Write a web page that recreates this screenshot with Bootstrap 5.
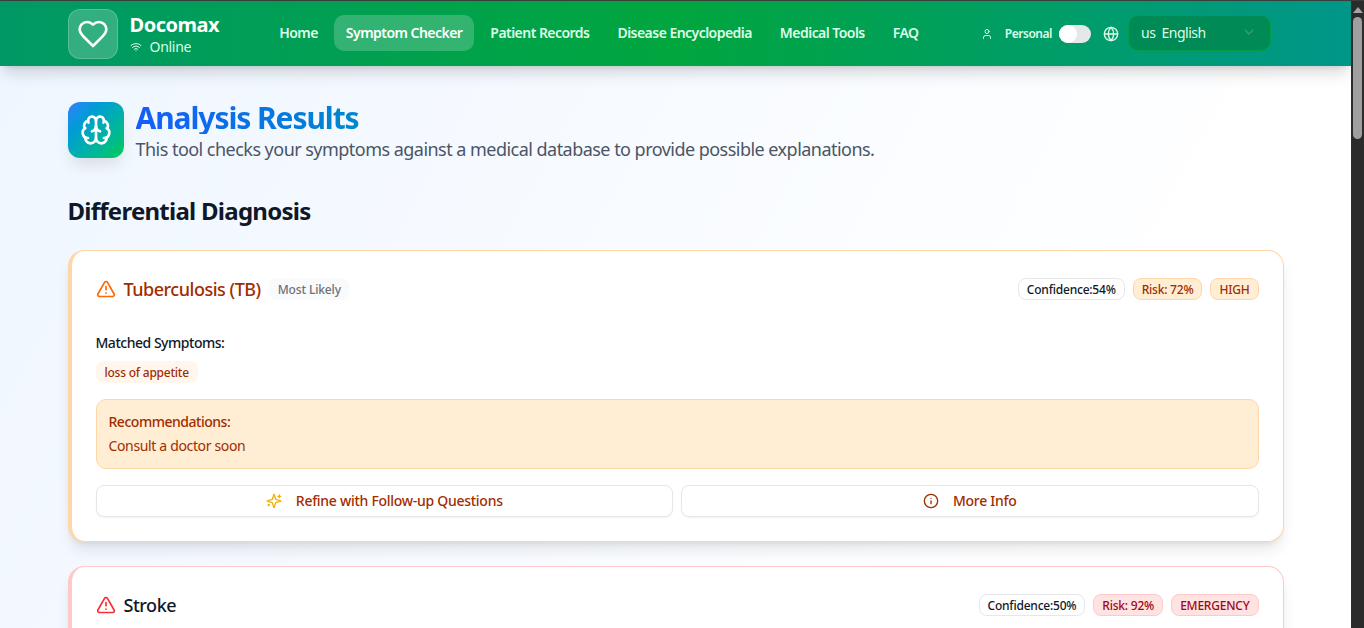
<!DOCTYPE html>
<html lang="en">
<head>
<meta charset="utf-8">
<title>Docomax</title>
<link href="https://cdn.jsdelivr.net/npm/bootstrap@5.3.0/dist/css/bootstrap.min.css" rel="stylesheet">
<style>
html,body{height:628px;overflow:hidden}
body{font-family:"Noto Sans",sans-serif;background:#2b2b2b;color:#101828;letter-spacing:-.03em}
.topline{height:1px;background:#3a3f3c}
.shell{height:627px}
.viewport{width:1351px;height:627px;overflow:hidden;background:linear-gradient(to bottom right,#eff6ff,#fff 50%) no-repeat;background-size:100% 2500px;background-color:#fff}
.fakebar{width:13px;background:#2b2b2b;padding:2px 1px}
.fakebar i{display:block}
.sb-up{width:0;height:0;border:5px solid transparent;border-top:0;border-bottom:6px solid #a3a3a3;margin:4px auto 4px}
.sb-thumb{width:9px;height:122px;border-radius:5px;background:#9f9f9f;margin:0 auto}
.appbar{height:65px;background:linear-gradient(90deg,#009966,#00a63e 50%,#009689);box-shadow:0 10px 15px -3px rgba(0,0,0,.15),0 4px 6px -4px rgba(0,0,0,.12);position:relative}
.wrap-x{padding:0 80px 0 67.5px}
.logo-box{width:50px;height:50px;border-radius:12px;background:rgba(255,255,255,.2);border:1px solid rgba(255,255,255,.2)}
.brand-block{margin-top:2px}
.brand-name{font-size:20px;font-weight:700;line-height:24px;color:#fff}
.brand-sub{font-size:14px;line-height:20px;color:#dcfce7;letter-spacing:-.02em}
.mainlink{font-size:14px;font-weight:600;color:#dcfce7;padding:8px 12px;line-height:20px;border-radius:10px;text-decoration:none;white-space:nowrap;letter-spacing:-.0385em}
.mainlink.on{background:rgba(255,255,255,.2);color:#fff}
.links{margin-left:48px;gap:4px;margin-bottom:1px}
.mode-label{font-size:12px;font-weight:600;color:#dcfce7;margin-right:7px}
.switcher{width:32px;height:18px;border-radius:9px;background:#e5e7eb;position:relative;margin-right:12px}
.switcher::after{content:"";position:absolute;left:0;top:0;width:18px;height:18px;border-radius:50%;background:#fff}
.lang-box{width:143px;height:36px;border-radius:10px;background:#008a55;border:1px solid #00a04a;padding:0 13px 2px 12px;font-size:14px;color:#dcfce7;margin-left:9px;margin-bottom:1px}
.lang-code{margin-right:6px}
.page-x{padding:36px 67.5px 0}
.head-ico{width:56px;height:56px;border-radius:12px;background:linear-gradient(135deg in oklab,#2b7fff,#00c950);box-shadow:0 10px 15px -3px rgba(0,0,0,.1)}
.title-main{font-size:30px;font-weight:700;line-height:32px;margin:0;background:linear-gradient(90deg,#155dfc,#0088cc);-webkit-background-clip:text;background-clip:text;color:transparent;display:inline-block;letter-spacing:-.036em}
.title-sub{font-size:18px;line-height:28px;color:#4a5565;margin:0;letter-spacing:-.0295em}
.sect-title{font-size:24px;font-weight:700;line-height:32px;color:#101828;margin:32px 0 23px;letter-spacing:-.031em}
.dx-card{background:#fff;border:1px solid;border-left-width:4px;border-radius:16px;padding:24px;box-shadow:0 10px 15px -3px rgba(0,0,0,.1),0 4px 6px -4px rgba(0,0,0,.1);margin-bottom:24px}
.dx-orange{border-color:#ffd6a7}
.dx-red{border-color:#ffc9c9}
.dx-name{font-size:18px;font-weight:500;line-height:28px;margin:0}
.tx-orange{color:#9f2d00}
.tag-soft{font-size:12px;font-weight:500;color:#6e7176;background:#f9fafb;border-radius:8px;padding:4px 8px 2px 9px;line-height:16px;letter-spacing:-.012em}
.pill{font-size:12px;font-weight:500;line-height:16px;padding:3px 8px 1px;border:1px solid;border-radius:8px;white-space:nowrap;letter-spacing:-.018em}
.pill-w{background:#fff;border-color:#e5e7eb;color:#101828}
.pill-o{background:#ffedd4;border-color:#ffd6a7;color:#9f2d00}
.pill-r{background:#ffe2e2;border-color:#ffc9c9;color:#9f0712}
.match-label{font-size:14px;font-weight:500;line-height:20px;color:#101828;margin:30px 0 8px}
.chip-o{font-size:12px;font-weight:500;line-height:16px;padding:4px 9px 2px;background:#fff7ed;color:#9f2d00;border-radius:8px;letter-spacing:-.019em}
.rec-box{background:#ffedd4;border:1px solid #ffd6a7;border-radius:10px;padding:12px;margin-top:16px;color:#9f2d00;height:70px}
.rec-h{font-size:14px;font-weight:500;line-height:20px;margin:0 0 4px}
.rec-t{font-size:14px;line-height:20px;margin:0;letter-spacing:-.025em}
.act-btn{flex:1 1 0;height:32px;background:#fff;border:1px solid #e5e7eb;border-radius:8px;font-size:14px;font-weight:500;color:#9f2d00;box-shadow:0 1px 2px rgba(0,0,0,.05);padding:0 0 1px;letter-spacing:-.02em}
.act-btn svg{margin-right:14px}
.acts{margin-top:16px}
</style>
</head>
<body>
<div class="topline"></div>
<div class="shell d-flex">
  <div class="viewport flex-shrink-0">
    <nav class="appbar d-flex align-items-center wrap-x">
      <div class="logo-box d-flex align-items-center justify-content-center flex-shrink-0">
        <svg width="32" height="32" viewBox="0 0 24 24" fill="none" stroke="#fff" stroke-width="2" stroke-linecap="round" stroke-linejoin="round"><path d="M19 14c1.49-1.46 3-3.21 3-5.5A5.5 5.5 0 0 0 16.5 3c-1.76 0-3 .5-4.5 2-1.5-1.5-2.74-2-4.5-2A5.5 5.5 0 0 0 2 8.5c0 2.3 1.5 4.05 3 5.5l7 7Z"/></svg>
      </div>
      <div class="brand-block ms-2 ps-1">
        <div class="brand-name">Docomax</div>
        <div class="brand-sub d-flex align-items-center gap-2">
          <svg width="12" height="12" viewBox="0 0 24 24" fill="none" stroke="#dcfce7" stroke-width="2" stroke-linecap="round" stroke-linejoin="round"><path d="M12 20h.01"/><path d="M2 8.82a15 15 0 0 1 20 0"/><path d="M5 12.86a10 10 0 0 1 14 0"/><path d="M8.5 16.43a5 5 0 0 1 7 0"/></svg>
          <span>Online</span>
        </div>
      </div>
      <div class="links d-flex align-items-center">
        <a class="mainlink" href="#">Home</a>
        <a class="mainlink on" href="#">Symptom Checker</a>
        <a class="mainlink" href="#">Patient Records</a>
        <a class="mainlink" href="#">Disease Encyclopedia</a>
        <a class="mainlink" href="#">Medical Tools</a>
        <a class="mainlink" href="#">FAQ</a>
      </div>
      <div class="ms-auto d-flex align-items-center">
        <svg class="me-2" width="12" height="12" viewBox="0 0 24 24" fill="none" stroke="#dcfce7" stroke-width="2" stroke-linecap="round" stroke-linejoin="round"><path d="M19 21v-2a4 4 0 0 0-4-4H9a4 4 0 0 0-4 4v2"/><circle cx="12" cy="7" r="4"/></svg>
        <span class="mode-label ms-1">Personal</span>
        <span class="switcher"></span>
        <svg width="16" height="16" viewBox="0 0 24 24" fill="none" stroke="#dcfce7" stroke-width="2" stroke-linecap="round" stroke-linejoin="round"><circle cx="12" cy="12" r="10"/><path d="M12 2a14.5 14.5 0 0 0 0 20 14.5 14.5 0 0 0 0-20"/><path d="M2 12h20"/></svg>
        <div class="lang-box d-flex align-items-center">
          <span class="lang-code">us</span><span>English</span>
          <svg class="ms-auto" width="16" height="16" viewBox="0 0 24 24" fill="none" stroke="#3d9a73" stroke-width="2" stroke-linecap="round" stroke-linejoin="round"><path d="m6 9 6 6 6-6"/></svg>
        </div>
      </div>
    </nav>
    <main class="page-x">
      <header class="d-flex align-items-start gap-2">
        <div class="head-ico d-flex align-items-center justify-content-center flex-shrink-0 me-1">
          <svg width="32" height="32" viewBox="0 0 24 24" fill="none" stroke="#fff" stroke-width="2" stroke-linecap="round" stroke-linejoin="round"><path d="M12 18V5"/><path d="M15 13a4.17 4.17 0 0 1-3-4 4.17 4.17 0 0 1-3 4"/><path d="M17.598 6.5A3 3 0 1 0 12 5a3 3 0 1 0-5.598 1.5"/><path d="M17.997 5.125a4 4 0 0 1 2.526 5.77"/><path d="M18 18a4 4 0 0 0 2-7.464"/><path d="M19.967 17.483A4 4 0 1 1 12 18a4 4 0 1 1-7.967-.517"/><path d="M6 18a4 4 0 0 1-2-7.464"/><path d="M6.003 5.125a4 4 0 0 0-2.526 5.77"/></svg>
        </div>
        <div>
          <h1 class="title-main">Analysis Results</h1>
          <p class="title-sub">This tool checks your symptoms against a medical database to provide possible explanations.</p>
        </div>
      </header>
      <h2 class="sect-title">Differential Diagnosis</h2>
      <section class="dx-card dx-orange">
        <div class="d-flex align-items-center">
          <svg class="me-2" width="20" height="20" viewBox="0 0 24 24" fill="none" stroke="#ff6900" stroke-width="2" stroke-linecap="round" stroke-linejoin="round"><path d="m21.73 18-8-14a2 2 0 0 0-3.48 0l-8 14A2 2 0 0 0 4 21h16a2 2 0 0 0 1.73-3"/><path d="M12 9v4"/><path d="M12 17h.01"/></svg>
          <h3 class="dx-name tx-orange">Tuberculosis (TB)</h3>
          <span class="tag-soft ms-2">Most Likely</span>
          <div class="ms-auto d-flex gap-2">
            <span class="pill pill-w">Confidence:54%</span>
            <span class="pill pill-o">Risk: 72%</span>
            <span class="pill pill-o">HIGH</span>
          </div>
        </div>
        <div class="match-label">Matched Symptoms:</div>
        <div class="d-flex"><span class="chip-o">loss of appetite</span></div>
        <div class="rec-box">
          <p class="rec-h">Recommendations:</p>
          <p class="rec-t">Consult a doctor soon</p>
        </div>
        <div class="acts d-flex gap-2">
          <button class="act-btn d-flex align-items-center justify-content-center" type="button">
            <svg width="16" height="16" viewBox="0 0 24 24" fill="none" stroke="#f0b100" stroke-width="2" stroke-linecap="round" stroke-linejoin="round"><path d="M9.937 15.5A2 2 0 0 0 8.5 14.063l-6.135-1.582a.5.5 0 0 1 0-.962L8.5 9.936A2 2 0 0 0 9.937 8.5l1.582-6.135a.5.5 0 0 1 .963 0L14.063 8.5A2 2 0 0 0 15.5 9.937l6.135 1.581a.5.5 0 0 1 0 .964L15.5 14.063a2 2 0 0 0-1.437 1.437l-1.582 6.135a.5.5 0 0 1-.963 0z"/><path d="M20 3v4"/><path d="M22 5h-4"/><path d="M4 17v2"/><path d="M5 18H3"/></svg>
            Refine with Follow-up Questions
          </button>
          <button class="act-btn d-flex align-items-center justify-content-center" type="button">
            <svg width="16" height="16" viewBox="0 0 24 24" fill="none" stroke="#9f2d00" stroke-width="2" stroke-linecap="round" stroke-linejoin="round"><circle cx="12" cy="12" r="10"/><path d="M12 16v-4"/><path d="M12 8h.01"/></svg>
            More Info
          </button>
        </div>
      </section>
      <section class="dx-card dx-red">
        <div class="d-flex align-items-center">
          <svg class="me-2" width="20" height="20" viewBox="0 0 24 24" fill="none" stroke="#fb2c36" stroke-width="2" stroke-linecap="round" stroke-linejoin="round"><path d="m21.73 18-8-14a2 2 0 0 0-3.48 0l-8 14A2 2 0 0 0 4 21h16a2 2 0 0 0 1.73-3"/><path d="M12 9v4"/><path d="M12 17h.01"/></svg>
          <h3 class="dx-name">Stroke</h3>
          <div class="ms-auto d-flex gap-2">
            <span class="pill pill-w">Confidence:50%</span>
            <span class="pill pill-r">Risk: 92%</span>
            <span class="pill pill-r">EMERGENCY</span>
          </div>
        </div>
      </section>
    </main>
  </div>
  <div class="fakebar flex-grow-1">
    <i class="sb-up"></i>
    <i class="sb-thumb"></i>
  </div>
</div>
<script src="https://cdn.jsdelivr.net/npm/bootstrap@5.3.0/dist/js/bootstrap.bundle.min.js"></script>
</body>
</html>
